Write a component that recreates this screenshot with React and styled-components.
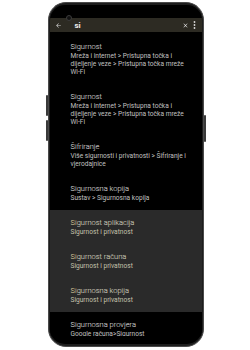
import styled, { createGlobalStyle } from "styled-components";

const rezultati = [
  { id: 1, naslov: "Sigurnost", put: "Mreža i internet > Pristupna točka i dijeljenje veze > Pristupna točka mreže Wi-Fi" },
  { id: 2, naslov: "Sigurnost", put: "Mreža i internet > Pristupna točka i dijeljenje veze > Pristupna točka mreže Wi-Fi" },
  { id: 3, naslov: "Šifriranje", put: "Više sigurnosti i privatnosti > Šifriranje i vjerodajnice" },
  { id: 4, naslov: "Sigurnosna kopija", put: "Sustav > Sigurnosna kopija" },
  { id: 5, naslov: "Sigurnost aplikacija", put: "Sigurnost i privatnost", istaknut: true },
  { id: 6, naslov: "Sigurnost računa", put: "Sigurnost i privatnost", istaknut: true },
  { id: 7, naslov: "Sigurnosna kopija", put: "Sigurnost i privatnost", istaknut: true },
  { id: 8, naslov: "Sigurnosna provjera", put: "Google računa>Sigurnost" },
];

const Global = createGlobalStyle`
  html, body {
    margin: 0;
    background: #ffffff;
  }
  body {
    font-family: Roboto, "Noto Sans", sans-serif;
  }
`;

export default function App() {
  return (
    <>
      <Global />
      <Page>
        <Phone>
          <SideButton $side="left" $top={92} $height={21} />
          <SideButton $side="left" $top={117} $height={21} />
          <SideButton $side="right" $top={112} $height={27} />
          <Screen>
            <Camera />
            <StatusBar />
            <Toolbar>
              <IconBtn>
                <svg width="7" height="7" viewBox="0 0 24 24">
                  <path d="M20 11H7.8l5.6-5.6L12 4l-8 8 8 8 1.4-1.4L7.8 13H20z" fill="#d8d8d8" />
                </svg>
              </IconBtn>
              <Query>si</Query>
              <IconBtn>
                <svg width="7" height="7" viewBox="0 0 24 24">
                  <path d="M19 6.4 17.6 5 12 10.6 6.4 5 5 6.4 10.6 12 5 17.6 6.4 19 12 13.4 17.6 19 19 17.6 13.4 12z" fill="#e0e0e0" />
                </svg>
              </IconBtn>
              <IconBtn>
                <svg width="3" height="8" viewBox="0 0 3 8">
                  <circle cx="1.5" cy="1" r="0.9" fill="#d8d8d8" />
                  <circle cx="1.5" cy="4" r="0.9" fill="#d8d8d8" />
                  <circle cx="1.5" cy="7" r="0.9" fill="#d8d8d8" />
                </svg>
              </IconBtn>
            </Toolbar>
            <List>
              {rezultati.map((r) => (
                <Item key={r.id} $istaknut={r.istaknut}>
                  <Title $istaknut={r.istaknut}>
                    {r.istaknut ? (
                      <>
                        <Mark>Si</Mark>
                        {r.naslov.slice(2)}
                      </>
                    ) : (
                      r.naslov
                    )}
                  </Title>
                  <Path $istaknut={r.istaknut}>{r.put}</Path>
                </Item>
              ))}
            </List>
          </Screen>
        </Phone>
      </Page>
    </>
  );
}

const Page = styled.div`
  width: 250px;
  height: 350px;
  display: flex;
  justify-content: center;
  padding-top: 2px;
  box-sizing: border-box;
`;

const Phone = styled.div`
  position: relative;
  width: 156px;
  height: 345px;
  box-sizing: border-box;
  margin-left: 1px;
  padding: 2px 1px 2px 1px;
  border-radius: 18px;
  background: #1d1d1d;
  border: 1px solid #4a4a4a;
`;

const SideButton = styled.div`
  position: absolute;
  top: ${(p) => p.$top}px;
  ${(p) => (p.$side === "left" ? "left: -3px;" : "right: -3px;")}
  width: 2px;
  height: ${(p) => p.$height}px;
  background: #3a3a3a;
  border-radius: 1px;
`;

const Screen = styled.div`
  position: relative;
  height: 100%;
  border-radius: 15px;
  overflow: hidden;
  background: #000;
  display: flex;
  flex-direction: column;
  padding-bottom: 8px;
  box-sizing: border-box;
`;

const Camera = styled.div`
  position: absolute;
  left: 16px;
  top: 10px;
  width: 4px;
  height: 4px;
  border-radius: 50%;
  background: #111;
  border: 1px solid #3c3c3c;
`;

const StatusBar = styled.div`
  height: 13px;
  flex-shrink: 0;
`;

const Toolbar = styled.div`
  height: 14px;
  flex-shrink: 0;
  display: flex;
  align-items: center;
  padding: 0 3px 0 4px;
  background: #2d2b23;
`;

const IconBtn = styled.div`
  width: 9px;
  height: 14px;
  display: flex;
  align-items: center;
  justify-content: center;
  &:nth-of-type(2) {
    margin-right: 12px;
  }
`;

const Query = styled.div`
  flex: 1;
  margin-left: 12px;
  color: #f0f0f0;
  font-size: 8px;
  font-weight: 700;
`;

const List = styled.div`
  flex: 1;
  overflow: hidden;
  padding-top: 10px;
`;

const Item = styled.div`
  padding: 8px 8px 8px 21px;
  background: ${(p) => (p.$istaknut ? "#2a2a2a" : "#000")};
  &:first-child {
    padding-top: 0;
  }
`;

const Title = styled.div`
  font-size: 7.5px;
  font-weight: 300;
  line-height: 10px;
  color: ${(p) => (p.$istaknut ? "#e6e4d8" : "#ededed")};
`;

const Mark = styled.span`
  color: #e8dea8;
`;

const Path = styled.div`
  font-size: 6.6px;
  font-weight: 400;
  line-height: 8px;
  color: ${(p) => (p.$istaknut ? "#c4c1aa" : "#c0c0c0")};
`;
